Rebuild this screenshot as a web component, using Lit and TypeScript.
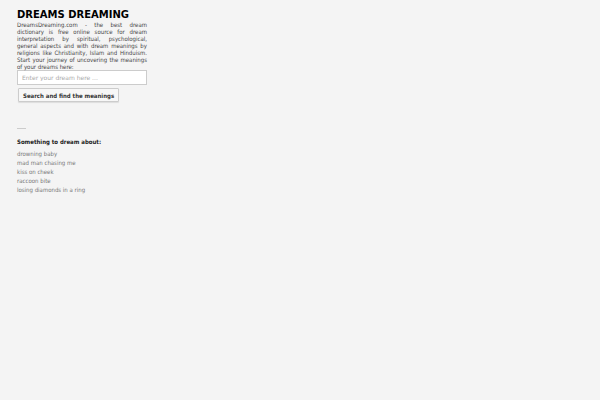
import { LitElement, html, css } from 'lit';
import { customElement } from 'lit/decorators.js';

@customElement('app-root')
export class DreamsHome extends LitElement {
  static styles = css`
    :host {
      display: block;
      box-sizing: border-box;
      min-height: 100vh;
      padding: 9px 17px;
      background: #f4f4f4;
      color: #444;
      font-family: 'DejaVu Sans Condensed', 'DejaVu Sans', Verdana, sans-serif;
      font-size: 6px;
      line-height: 7px;
    }
    .column {
      max-width: 130px;
    }
    .title {
      margin: 0;
      color: #000;
      font-family: 'DejaVu Sans', Verdana, sans-serif;
      font-size: 10px;
      line-height: 12px;
    }
    .intro {
      margin: 0;
      text-align: justify;
    }
    .query {
      display: block;
      box-sizing: border-box;
      width: 100%;
      height: 15px;
      padding: 0 4px;
      border: 1px solid #ccc;
      background: #fff;
      color: #444;
      font-family: 'DejaVu Sans', Verdana, sans-serif;
      font-size: 6px;
    }
    .query::placeholder {
      color: #aaa;
      opacity: 1;
    }
    .submit {
      display: block;
      height: 14px;
      margin: 3px 1px 0;
      padding: 0 4px;
      border: 1px solid #ccc;
      border-radius: 1px;
      background: #f7f7f7;
      box-shadow: 0 1px 1px #ddd;
      color: #333;
      font: inherit;
      font-weight: bold;
    }
    .rule {
      width: 9px;
      margin: 26px 0 9px;
      border: 0;
      border-top: 1px solid #ccc;
    }
    .subtitle {
      margin: 0 0 4px;
      color: #222;
      font-size: 6px;
    }
    .dreams {
      margin: 0;
      padding: 0;
      list-style: none;
      line-height: 9px;
    }
    .dreams a {
      color: #777;
      text-decoration: none;
    }
  `;

  dreams = [
    'drowning baby',
    'mad man chasing me',
    'kiss on cheek',
    'raccoon bite',
    'losing diamonds in a ring',
  ];

  render() {
    return html`
      <main class="column">
        <h1 class="title">DREAMS DREAMING</h1>
        <p class="intro">
          DreamsDreaming.com - the best dream dictionary is free online source
          for dream interpretation by spiritual, psychological, general aspects
          and with dream meanings by religions like Christianity, Islam and
          Hinduism. Start your journey of uncovering the meanings of your dreams
          here:
        </p>
        <form @submit=${(e: Event) => e.preventDefault()}>
          <input class="query" type="text" aria-label="Your dream" placeholder="Enter your dream here ..." />
          <button class="submit" type="submit">Search and find the meanings</button>
        </form>
        <hr class="rule" />
        <h2 class="subtitle">Something to dream about:</h2>
        <ul class="dreams">
          ${this.dreams.map((dream) => html`<li><a href="#">${dream}</a></li>`)}
        </ul>
      </main>
    `;
  }
}
